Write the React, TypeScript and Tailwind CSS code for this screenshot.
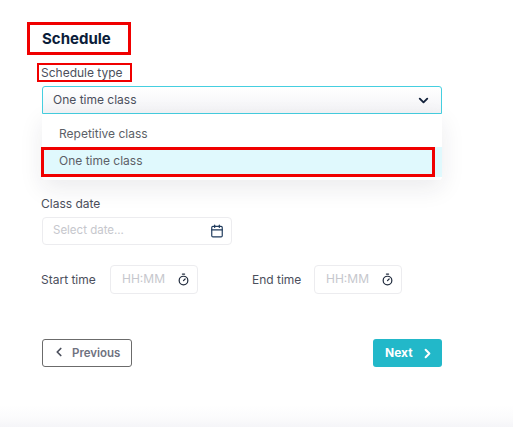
import { Calendar, ChevronDown, ChevronLeft, ChevronRight, Timer } from "lucide-react";

const font = "font-['Inter','Open_Sans',sans-serif]";

function TimeField({ label, labelWidth }: { label: string; labelWidth: string }) {
  return (
    <div className="flex items-center">
      <span className={`${labelWidth} -ml-px text-[12px] text-[#4b4f5c]`}>{label}</span>
      <div className="ml-px flex h-[29px] w-[88px] items-center justify-between rounded-[4px] border border-[#ececef] bg-white pl-[11px] pr-[7px]">
        <span className="pb-[1px] text-[12px] text-[#c6c7cd]">HH:MM</span>
        <Timer size={13} strokeWidth={2.25} className="text-[#1f2a3c]" />
      </div>
    </div>
  );
}

export default function App() {
  return (
    <div className={`${font} relative h-[427px] w-[513px] overflow-hidden bg-white bg-[linear-gradient(to_bottom,#ffffff_0,#ffffff_405px,#fbfbfc_418px,#f5f5f8_427px)] px-[42px] pt-[22px]`}>
      {/* annotated heading */}
      <div className="-ml-[15px] flex h-[33px] w-[104px] items-center border-[3px] border-[#f00000] pl-[12px] pt-[2px]">
        <h1 className="text-[15px] font-bold text-[#0b1d3a]">Schedule</h1>
      </div>

      <div className="-ml-[5px] mt-[8px] flex h-[19px] w-[95px] items-center border-[2px] border-[#f00000] pl-[2px]">
        <span className="whitespace-nowrap text-[12px] text-[#4b4f5c]">Schedule type</span>
      </div>

      {/* select + open menu */}
      <div className="relative mt-[4px] w-[400px]">
        <div className="flex h-[28px] items-center justify-between rounded-t-[3px] border border-[#45cfe0] bg-[linear-gradient(to_bottom,#ffffff,#f3f3f6)] pl-[10px] pr-[10px]">
          <span className="text-[12px] text-[#4b4f5c]">One time class</span>
          <ChevronDown size={15} strokeWidth={3} className="text-[#14233c]" />
        </div>
        <div className="absolute left-0 right-0 top-[28px] z-10 h-[66px] rounded-b-[3px] bg-white pt-[5px] shadow-[0_8px_24px_rgba(30,30,60,0.09)]">
          <div className="flex h-[28px] items-center pl-[17px] pt-[2px] text-[12px] text-[#5c5f67]">Repetitive class</div>
          <div className="h-[30px] bg-[#e0f9fd]">
            <div className="flex h-[30px] w-[394px] -translate-x-px items-center border-[3px] border-[#f00000] pb-[2px] pl-[15px] text-[12px] text-[#5c5f67]">
              One time class
            </div>
          </div>
        </div>
      </div>

      <div className="-ml-px mt-[80px] pt-[1px] text-[12px] leading-[18px] text-[#4b4f5c]">Class date</div>
      <div className="mt-[4px] flex h-[28px] w-[190px] items-center justify-between rounded-[4px] border border-[#ececef] bg-white pl-[10px] pr-[7px]">
        <span className="text-[11.5px] text-[#c6c7cd]">Select date...</span>
        <Calendar size={14} strokeWidth={2} className="text-[#1f3a5c]" />
      </div>

      <div className="mt-[20px] flex items-center gap-[54px]">
        <TimeField label="Start time" labelWidth="w-[68px]" />
        <TimeField label="End time" labelWidth="w-[62px] translate-x-px" />
      </div>

      <div className="mt-[45px] flex w-[400px] items-center justify-between">
        <button className="flex h-[28px] w-[90px] items-center rounded-[3px] border border-[#6b6b6b] bg-white pl-[9px] pt-[1px] text-[11.5px] font-semibold text-[#6f7280]">
          <ChevronLeft size={14} strokeWidth={3} className="-mt-[3px] text-[#4b4f5c]" />
          <span className="ml-[6px]">Previous</span>
        </button>
        <button className="flex h-[28px] w-[69px] items-center rounded-[3px] bg-[#22b8c9] pl-[12px] text-[12px] font-bold text-white">
          Next
          <ChevronRight size={15} strokeWidth={3.25} className="ml-[7px]" />
        </button>
      </div>
    </div>
  );
}
